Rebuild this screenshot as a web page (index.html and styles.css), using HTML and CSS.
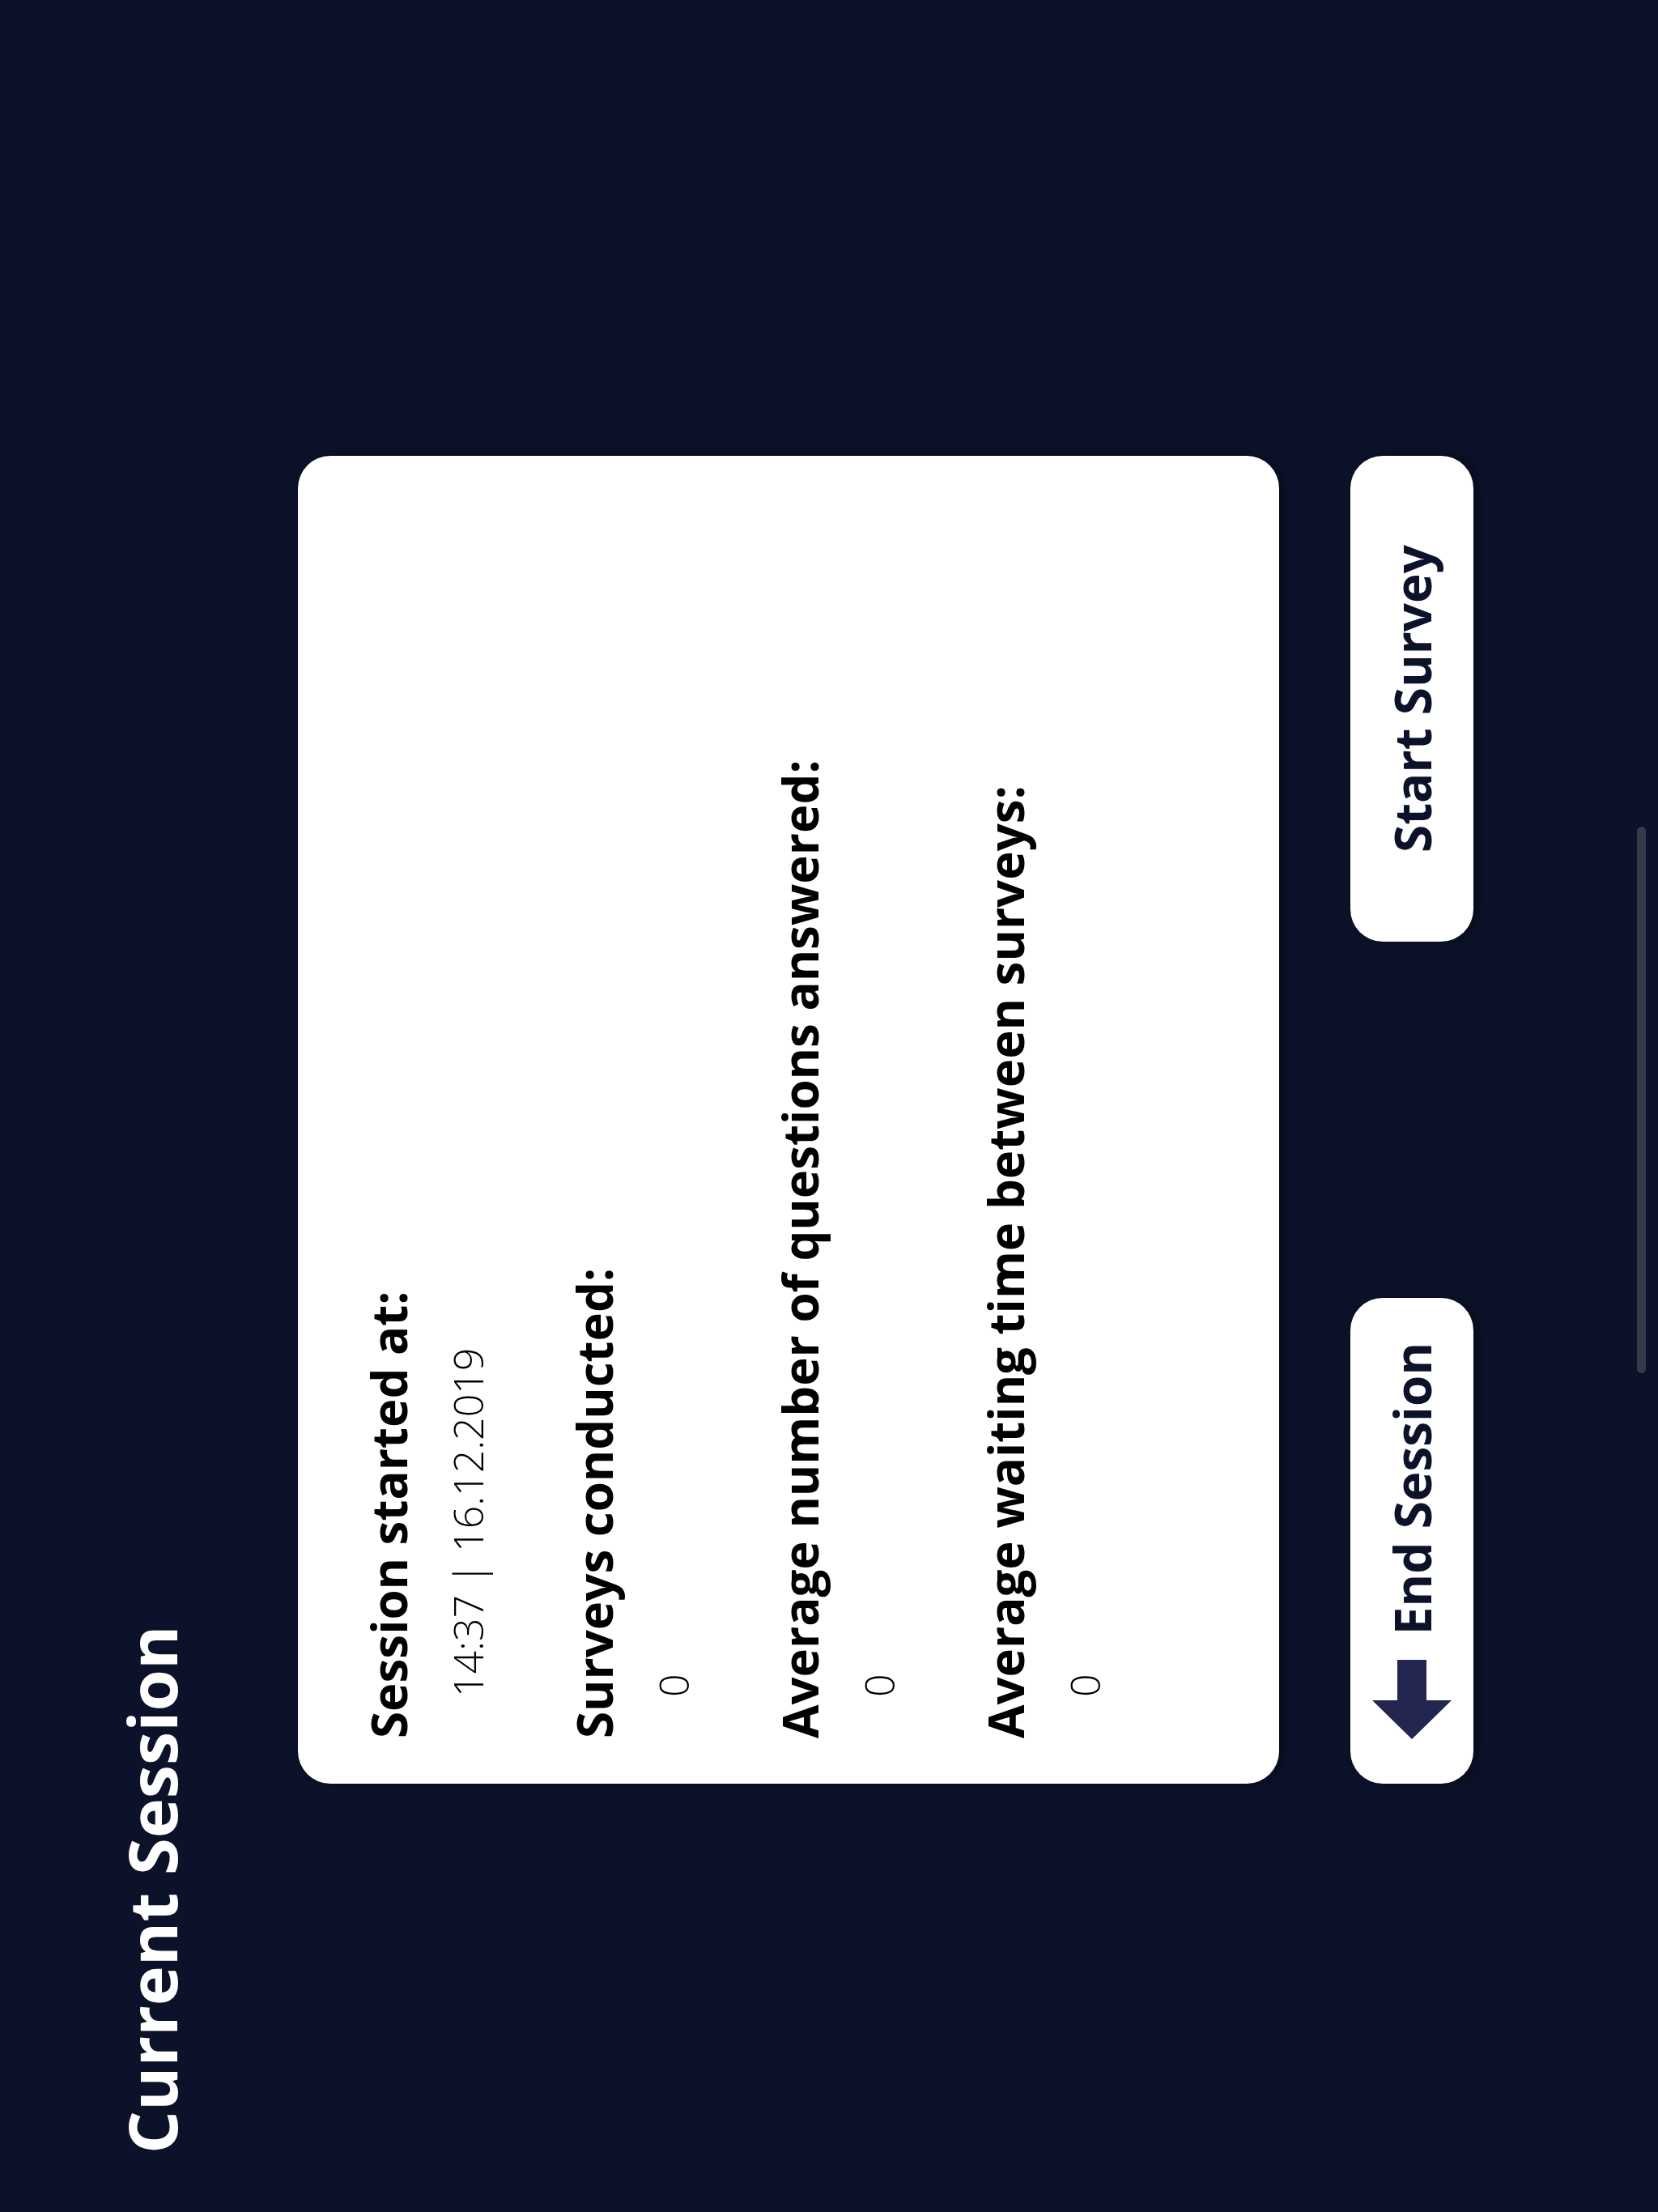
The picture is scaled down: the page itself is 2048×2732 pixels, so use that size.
FILE: index.html
```html
<!DOCTYPE html>
<html lang="en">
<head>
<meta charset="utf-8">
<title>Current Session</title>
<link rel="stylesheet" href="styles.css">
</head>
<body>
<div class="stage">
  <h1 class="title">Current Session</h1>
  <main class="content">
    <section class="card">
      <div class="stat">
        <div class="stat-label">Session started at:</div>
        <div class="stat-value">14:37 | 16.12.2019</div>
      </div>
      <div class="stat">
        <div class="stat-label">Surveys conducted:</div>
        <div class="stat-value">0</div>
      </div>
      <div class="stat">
        <div class="stat-label">Average number of questions answered:</div>
        <div class="stat-value">0</div>
      </div>
      <div class="stat">
        <div class="stat-label">Average waiting time between surveys:</div>
        <div class="stat-value">0</div>
      </div>
    </section>
    <div class="actions">
      <button class="btn btn-end" type="button">
        <svg class="btn-icon" width="98" height="98" viewBox="0 0 98 98" aria-hidden="true">
          <polygon points="0,49 48,0 48,31 98,31 98,67 48,67 48,98" fill="#23264f"/>
        </svg>
        <span>End Session</span>
      </button>
      <button class="btn btn-start" type="button"><span>Start Survey</span></button>
    </div>
  </main>
  <div class="scroll-indicator"></div>
</div>
</body>
</html>
```

FILE: styles.css
```css
html, body {
  margin: 0;
  padding: 0;
  background: #0b1229;
}

body {
  width: 2048px;
  height: 2732px;
  overflow: hidden;
  position: relative;
  font-family: "Open Sans", "Noto Sans", "Liberation Sans", sans-serif;
}

/* Landscape app rotated into the portrait capture */
.stage {
  width: 2732px;
  height: 2048px;
  box-sizing: border-box;
  padding: 145px 0 0 72px;
  transform-origin: 0 0;
  transform: translateY(2732px) rotate(-90deg);
  position: relative;
}

.title {
  margin: 0;
  font-size: 83px;
  line-height: 83px;
  font-weight: 700;
  color: #ffffff;
}

.content {
  margin: 140px 0 0 457px;
  width: 1640px;
}

.card {
  box-sizing: border-box;
  width: 1640px;
  height: 1212px;
  background: #ffffff;
  border-radius: 40px;
  padding: 82px 56px 0;
  box-shadow: 0 6px 12px rgba(0, 0, 0, 0.35);
  display: flex;
  flex-direction: column;
  gap: 101px;
}

.stat {
  display: flex;
  flex-direction: column;
  gap: 43px;
}

.stat-label {
  font-size: 60px;
  line-height: 60px;
  font-weight: 700;
  color: #000000;
}

.stat-value {
  font-size: 50px;
  line-height: 50px;
  font-weight: 300;
  color: #000000;
  padding-left: 51px;
}

.actions {
  margin-top: 88px;
  display: flex;
  justify-content: space-between;
}

.btn {
  width: 600px;
  height: 152px;
  border: none;
  border-radius: 40px;
  background: #ffffff;
  box-shadow: 0 6px 12px rgba(0, 0, 0, 0.35);
  display: flex;
  align-items: center;
  justify-content: center;
  gap: 31px;
  padding: 0;
  font-family: inherit;
  font-size: 62px;
  line-height: 62px;
  font-weight: 700;
  color: #0b1229;
}

.btn-icon {
  display: block;
  flex: none;
}

.scroll-indicator {
  position: absolute;
  left: 1036px;
  top: 2022px;
  width: 675px;
  height: 11px;
  border-radius: 6px;
  background: #363a48;
}
```
